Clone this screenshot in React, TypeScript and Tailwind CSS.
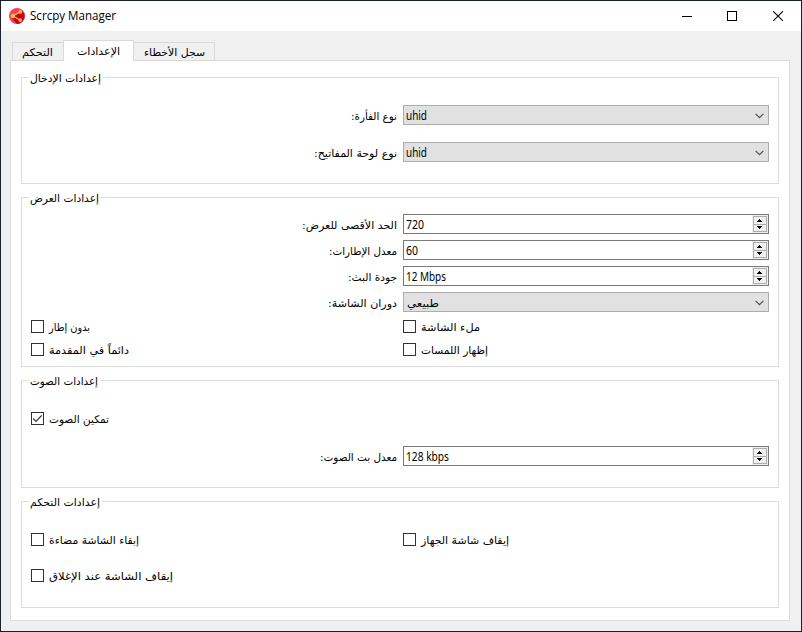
import { useLayoutEffect, useRef, type ReactNode } from "react";

const AR = "font-['DejaVu_Sans',sans-serif]";
const LATIN = "font-['Noto_Sans',sans-serif] text-xs leading-[16px] pt-px";

function Run({ w, rtl = true, className = "", children }: { w: number; rtl?: boolean; className?: string; children: ReactNode }) {
  const ref = useRef<HTMLSpanElement>(null);
  useLayoutEffect(() => {
    const el = ref.current;
    if (el && el.offsetWidth) {
      el.style.transform = `scaleX(${w / el.getBoundingClientRect().width})`;
    }
    return () => {
      if (el) el.style.transform = "";
    };
  }, [w]);
  return (
    <span className="flex shrink-0 justify-start" style={{ width: w }}>
      <span ref={ref} dir={rtl ? "rtl" : "ltr"} className={`block shrink-0 origin-left whitespace-nowrap ${className}`}>
        {children}
      </span>
    </span>
  );
}

function Group({ title, w, className, children }: { title: string; w: number; className: string; children: ReactNode }) {
  return (
    <section className={`relative border border-[#dcdcdc] ${className}`}>
      <h2 className={`absolute -top-[7px] left-[7px] bg-white pr-[2px] pl-px text-[10.5px] leading-[14px] ${AR}`}>
        <Run w={w}>{title}</Run>
      </h2>
      {children}
    </section>
  );
}

function Row({ label, w, className = "", children }: { label: string; w: number; className?: string; children: ReactNode }) {
  return (
    <div className={`flex h-5 items-center ${className}`}>
      <div className={`flex w-[366px] justify-end pt-[2px] text-[10.5px] leading-[16px] ${AR}`}>
        <Run w={w}>{label}</Run>
      </div>
      <div className="ml-[6px] w-[366px]">{children}</div>
    </div>
  );
}

function Combo({ children }: { children: ReactNode }) {
  return (
    <div className="flex h-5 items-center justify-between border border-[#adadad] bg-[#e1e1e1] pr-[4px] pl-[2px]">
      {children}
      <svg className="mt-px" width="9" height="6" viewBox="0 0 9 6" fill="none" stroke="#505050" strokeWidth="1.2">
        <path d="M.6.8 4.5 4.7 8.4.8" />
      </svg>
    </div>
  );
}

function Spin({ value, w }: { value: string; w: number }) {
  return (
    <div className="flex h-5 items-center justify-between border border-[#7a7a7a] bg-white pl-[2px]">
      <Run w={w} rtl={false} className={LATIN}>{value}</Run>
      <div className="flex h-[18px] w-[16px] items-center bg-[#f0f0f0] pl-px">
        <svg width="14" height="16" viewBox="0 0 14 16" shapeRendering="crispEdges">
          <path d="M.5.5h13v15H.5zM0 8.5h14" fill="#f0f0f0" stroke="#adadad" />
          <path d="M6 3h1v1h1v1h1v1H4V5h1V4h1zM4 10h5v1H8v1H7v1H6v-1H5v-1H4z" fill="#000" />
        </svg>
      </div>
    </div>
  );
}

function Check({ label, w, checked = false }: { label: string; w: number; checked?: boolean }) {
  return (
    <label className="flex h-[13px] items-center">
      <span className="flex h-[13px] w-[13px] items-center justify-center border border-[#333] bg-white">
        {checked && (
          <svg width="11" height="11" viewBox="0 0 11 11" fill="none" stroke="#333" strokeWidth="1.2">
            <path d="M1.2 5.5 4 8.3 9.8 2.4" />
          </svg>
        )}
      </span>
      <span className={`ml-[5px] text-[10.5px] leading-[16px] ${AR}`}>
        <Run w={w}>{label}</Run>
      </span>
    </label>
  );
}

export default function App() {
  return (
    <div className="flex h-[632px] w-[802px] flex-col overflow-hidden border border-[#1a202c] bg-[#f0f0f0] text-black">
      <header className="flex h-[30px] shrink-0 items-center bg-white pl-2">
        <svg width="16" height="16" viewBox="0 0 16 16">
          <circle cx="8" cy="8" r="8" fill="#f43f5e" />
          <path d="M12.5 2.8 15 5.2A8 8 0 0 1 8 16L2.6 9.6z" fill="#c8001f" />
          <path d="M11 4 4 8l7 4" fill="none" stroke="#fbbf24" strokeWidth="1.3" />
          <circle cx="11.2" cy="3.9" r="1.9" fill="#fcb827" />
          <circle cx="3.9" cy="8" r="2.2" fill="#fcc532" />
          <circle cx="11.2" cy="12.1" r="1.9" fill="#fcb827" />
        </svg>
        <h1 className="ml-[5px] font-['Open_Sans',sans-serif] text-[12.5px] leading-4">
          <Run w={86} rtl={false}>Scrcpy Manager</Run>
        </h1>
        <svg className="mr-[17px] ml-auto" width="102" height="10" viewBox="0 0 102 10" fill="none" stroke="#000">
          <path d="M0 5.5h10M45.5.5h9v9h-9z" shapeRendering="crispEdges" />
          <path d="M91.2.3 100.9 9.8M100.9.3 91.2 9.8" strokeWidth="1.1" />
        </svg>
      </header>

      <main className="flex flex-1 flex-col pt-[9px] pr-[11px] pb-[10px] pl-[9px]">
        <nav className={`z-10 -mb-px flex h-[21px] shrink-0 items-end pl-[2px] text-[10.5px] leading-[16px] ${AR}`}>
          <div className="flex h-[19px] w-[51px] border border-r-0 border-[#d9d9d9] bg-[#f0f0f0] pt-px pl-[9px]">
            <Run w={31}>التحكم</Run>
          </div>
          <div className="flex h-[21px] w-[71px] border border-b-0 border-[#d9d9d9] bg-white pt-[2px] pl-[13px]">
            <Run w={43}>الإعدادات</Run>
          </div>
          <div className="flex h-[19px] w-[81px] border border-l-0 border-[#d9d9d9] bg-[#f0f0f0] pt-px pl-[10px]">
            <Run w={61}>سجل الأخطاء</Run>
          </div>
        </nav>

        <div className="flex flex-1 flex-col border border-[#dcdcdc] bg-white px-[10px] pt-[16px] pb-[12px]">
          <Group title="إعدادات الإدخال" w={71} className="h-[107px] pt-[27px] pl-[9px]">
            <Row label="نوع الفأرة:" w={46}>
              <Combo><Run w={21} rtl={false} className={LATIN}>uhid</Run></Combo>
            </Row>
            <Row label="نوع لوحة المفاتيح:" w={83} className="mt-[17px]">
              <Combo><Run w={21} rtl={false} className={LATIN}>uhid</Run></Combo>
            </Row>
          </Group>

          <Group title="إعدادات العرض" w={69} className="mt-[13px] h-[170px] pt-[16px] pl-[9px]">
            <div className="flex flex-col gap-[6px]">
              <Row label="الحد الأقصى للعرض:" w={95}><Spin value="720" w={18} /></Row>
              <Row label="معدل الإطارات:" w={68}><Spin value="60" w={12} /></Row>
              <Row label="جودة البث:" w={49}><Spin value="12 Mbps" w={40} /></Row>
              <Row label="دوران الشاشة:" w={69}>
                <Combo>
                  <span className="pt-px pl-px"><Run w={32} className={`text-[10.5px] leading-[14px] ${AR}`}>طبيعي</Run></span>
                </Combo>
              </Row>
            </div>
            <div className="mt-[8px] grid grid-cols-[372px_1fr] gap-y-[10px]">
              <Check label="بدون إطار" w={41} />
              <Check label="ملء الشاشة" w={59} />
              <Check label="دائماً في المقدمة" w={80} />
              <Check label="إظهار اللمسات" w={67} />
            </div>
          </Group>

          <Group title="إعدادات الصوت" w={68} className="mt-[13px] h-[108px] pt-[31px] pl-[9px]">
            <Check label="تمكين الصوت" w={60} checked />
            <Row label="معدل بت الصوت:" w={77} className="mt-[21px]"><Spin value="128 kbps" w={43} /></Row>
          </Group>

          <Group title="إعدادات التحكم" w={70} className="mt-[13px] h-[107px] pt-[31px] pl-[9px]">
            <div className="grid grid-cols-[372px_1fr] gap-y-[23px]">
              <Check label="إبقاء الشاشة مضاءة" w={90} />
              <Check label="إيقاف شاشة الجهاز" w={88} />
              <Check label="إيقاف الشاشة عند الإغلاق" w={124} />
            </div>
          </Group>
        </div>
      </main>
    </div>
  );
}
